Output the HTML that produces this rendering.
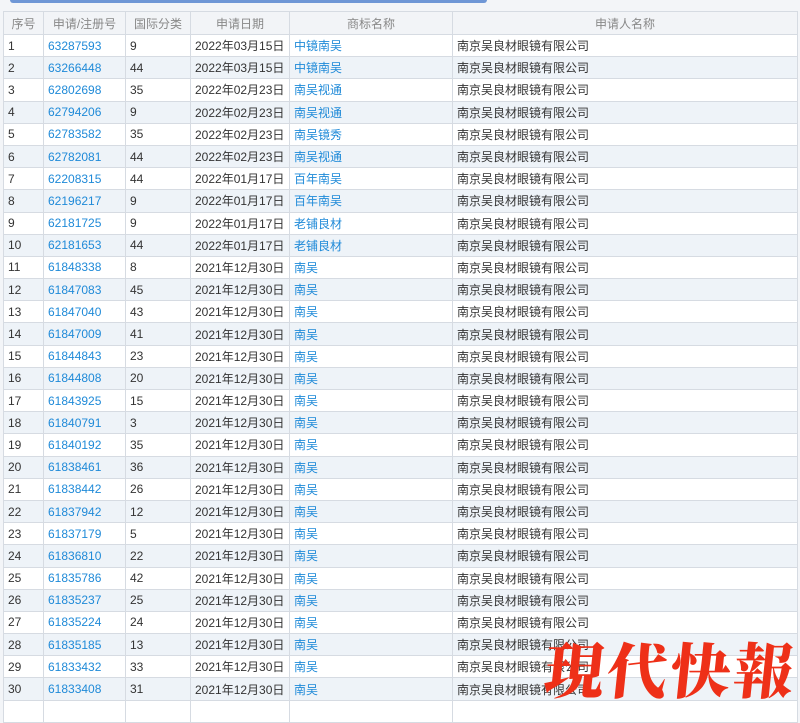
<!DOCTYPE html>
<html><head><meta charset="utf-8"><style>
body{margin:0;width:800px;height:703px;overflow:hidden;background:#f3f5f8;font-family:"Liberation Sans","Microsoft YaHei","Noto Sans CJK SC",sans-serif;position:relative}
.bar{position:absolute;left:10px;top:0;width:477px;height:3px;background:#6f97d6;border-radius:0 0 3px 3px}
table{position:absolute;left:3px;top:11px;border-collapse:collapse;table-layout:fixed;width:795px;font-size:12px;color:#333}
td,th{border:1px solid #d6dbe2;padding:0 0 0 4px;white-space:nowrap;overflow:hidden;text-align:left;font-weight:normal}
th{height:22px;background:#f2f4f7;color:#888;text-align:center;padding:0}
tr.r{height:22.2px}
tr.r td{background:#fff}
tr.r:nth-child(even) td{background:#eef3f8}
a{color:#1f8ad8;text-decoration:none}
.wm{position:absolute;left:545px;top:636px;font-family:"Noto Serif CJK SC","WenQuanYi Zen Hei",serif;font-weight:900;font-size:60px;color:#ee3018;letter-spacing:3px;line-height:64px;transform:skewX(-6deg)}
</style></head><body>
<div class="bar"></div>
<table>
<colgroup><col style="width:40px"><col style="width:82px"><col style="width:65px"><col style="width:99px"><col style="width:163px"><col></colgroup>
<thead><tr><th>序号</th><th>申请/注册号</th><th>国际分类</th><th>申请日期</th><th>商标名称</th><th>申请人名称</th></tr></thead>
<tbody>
<tr class="r"><td>1</td><td><a>63287593</a></td><td>9</td><td>2022年03月15日</td><td><a>中镜南吴</a></td><td>南京吴良材眼镜有限公司</td></tr>
<tr class="r"><td>2</td><td><a>63266448</a></td><td>44</td><td>2022年03月15日</td><td><a>中镜南吴</a></td><td>南京吴良材眼镜有限公司</td></tr>
<tr class="r"><td>3</td><td><a>62802698</a></td><td>35</td><td>2022年02月23日</td><td><a>南吴视通</a></td><td>南京吴良材眼镜有限公司</td></tr>
<tr class="r"><td>4</td><td><a>62794206</a></td><td>9</td><td>2022年02月23日</td><td><a>南吴视通</a></td><td>南京吴良材眼镜有限公司</td></tr>
<tr class="r"><td>5</td><td><a>62783582</a></td><td>35</td><td>2022年02月23日</td><td><a>南吴镜秀</a></td><td>南京吴良材眼镜有限公司</td></tr>
<tr class="r"><td>6</td><td><a>62782081</a></td><td>44</td><td>2022年02月23日</td><td><a>南吴视通</a></td><td>南京吴良材眼镜有限公司</td></tr>
<tr class="r"><td>7</td><td><a>62208315</a></td><td>44</td><td>2022年01月17日</td><td><a>百年南吴</a></td><td>南京吴良材眼镜有限公司</td></tr>
<tr class="r"><td>8</td><td><a>62196217</a></td><td>9</td><td>2022年01月17日</td><td><a>百年南吴</a></td><td>南京吴良材眼镜有限公司</td></tr>
<tr class="r"><td>9</td><td><a>62181725</a></td><td>9</td><td>2022年01月17日</td><td><a>老铺良材</a></td><td>南京吴良材眼镜有限公司</td></tr>
<tr class="r"><td>10</td><td><a>62181653</a></td><td>44</td><td>2022年01月17日</td><td><a>老铺良材</a></td><td>南京吴良材眼镜有限公司</td></tr>
<tr class="r"><td>11</td><td><a>61848338</a></td><td>8</td><td>2021年12月30日</td><td><a>南吴</a></td><td>南京吴良材眼镜有限公司</td></tr>
<tr class="r"><td>12</td><td><a>61847083</a></td><td>45</td><td>2021年12月30日</td><td><a>南吴</a></td><td>南京吴良材眼镜有限公司</td></tr>
<tr class="r"><td>13</td><td><a>61847040</a></td><td>43</td><td>2021年12月30日</td><td><a>南吴</a></td><td>南京吴良材眼镜有限公司</td></tr>
<tr class="r"><td>14</td><td><a>61847009</a></td><td>41</td><td>2021年12月30日</td><td><a>南吴</a></td><td>南京吴良材眼镜有限公司</td></tr>
<tr class="r"><td>15</td><td><a>61844843</a></td><td>23</td><td>2021年12月30日</td><td><a>南吴</a></td><td>南京吴良材眼镜有限公司</td></tr>
<tr class="r"><td>16</td><td><a>61844808</a></td><td>20</td><td>2021年12月30日</td><td><a>南吴</a></td><td>南京吴良材眼镜有限公司</td></tr>
<tr class="r"><td>17</td><td><a>61843925</a></td><td>15</td><td>2021年12月30日</td><td><a>南吴</a></td><td>南京吴良材眼镜有限公司</td></tr>
<tr class="r"><td>18</td><td><a>61840791</a></td><td>3</td><td>2021年12月30日</td><td><a>南吴</a></td><td>南京吴良材眼镜有限公司</td></tr>
<tr class="r"><td>19</td><td><a>61840192</a></td><td>35</td><td>2021年12月30日</td><td><a>南吴</a></td><td>南京吴良材眼镜有限公司</td></tr>
<tr class="r"><td>20</td><td><a>61838461</a></td><td>36</td><td>2021年12月30日</td><td><a>南吴</a></td><td>南京吴良材眼镜有限公司</td></tr>
<tr class="r"><td>21</td><td><a>61838442</a></td><td>26</td><td>2021年12月30日</td><td><a>南吴</a></td><td>南京吴良材眼镜有限公司</td></tr>
<tr class="r"><td>22</td><td><a>61837942</a></td><td>12</td><td>2021年12月30日</td><td><a>南吴</a></td><td>南京吴良材眼镜有限公司</td></tr>
<tr class="r"><td>23</td><td><a>61837179</a></td><td>5</td><td>2021年12月30日</td><td><a>南吴</a></td><td>南京吴良材眼镜有限公司</td></tr>
<tr class="r"><td>24</td><td><a>61836810</a></td><td>22</td><td>2021年12月30日</td><td><a>南吴</a></td><td>南京吴良材眼镜有限公司</td></tr>
<tr class="r"><td>25</td><td><a>61835786</a></td><td>42</td><td>2021年12月30日</td><td><a>南吴</a></td><td>南京吴良材眼镜有限公司</td></tr>
<tr class="r"><td>26</td><td><a>61835237</a></td><td>25</td><td>2021年12月30日</td><td><a>南吴</a></td><td>南京吴良材眼镜有限公司</td></tr>
<tr class="r"><td>27</td><td><a>61835224</a></td><td>24</td><td>2021年12月30日</td><td><a>南吴</a></td><td>南京吴良材眼镜有限公司</td></tr>
<tr class="r"><td>28</td><td><a>61835185</a></td><td>13</td><td>2021年12月30日</td><td><a>南吴</a></td><td>南京吴良材眼镜有限公司</td></tr>
<tr class="r"><td>29</td><td><a>61833432</a></td><td>33</td><td>2021年12月30日</td><td><a>南吴</a></td><td>南京吴良材眼镜有限公司</td></tr>
<tr class="r"><td>30</td><td><a>61833408</a></td><td>31</td><td>2021年12月30日</td><td><a>南吴</a></td><td>南京吴良材眼镜有限公司</td></tr>
<tr class="r"><td></td><td></td><td></td><td></td><td></td><td></td></tr>
</tbody></table>
<div class="wm">現代快報</div>
</body></html>
